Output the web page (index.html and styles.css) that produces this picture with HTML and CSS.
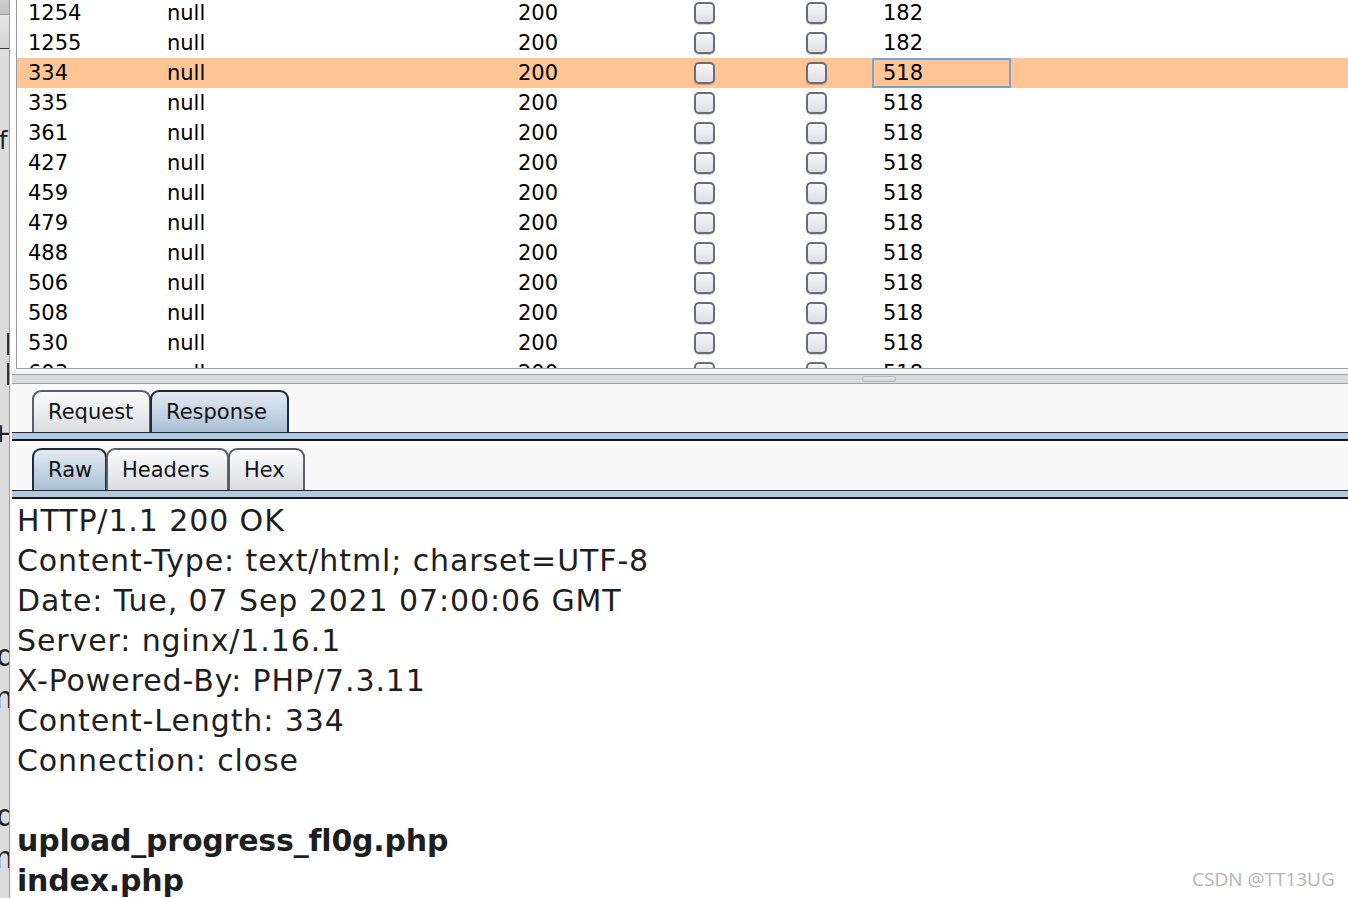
FILE: index.html
```html
<!DOCTYPE html>
<html>
<head>
<meta charset="utf-8">
<link rel="stylesheet" href="styles.css">
</head>
<body>
<div class="app">
  <div class="strip">
    <div class="s-top"></div>
    <div class="s-btn"></div>
    <div class="s-frag s-f">f</div>
    <div class="s-bar s-bar1"></div>
    <div class="s-bar s-bar2"></div>
    <div class="s-frag s-plus">+</div>
    <div class="s-frag s-big s-ld1">ld</div>
    <div class="s-frag s-big s-m1">m</div>
    <div class="s-frag s-big s-ld2">ld</div>
    <div class="s-frag s-big s-m2">m</div>
  </div>
  <div class="main">
    <div class="table-zone">
      <div class="table">
        <div class="rows">
          <div class="row"><div class="c c1">1254</div><div class="c c2">null</div><div class="c c3">200</div><div class="c c4"><span class="cb"></span></div><div class="c c5"><span class="cb"></span></div><div class="c c6">182</div></div>
          <div class="row"><div class="c c1">1255</div><div class="c c2">null</div><div class="c c3">200</div><div class="c c4"><span class="cb"></span></div><div class="c c5"><span class="cb"></span></div><div class="c c6">182</div></div>
          <div class="row sel"><div class="c c1">334</div><div class="c c2">null</div><div class="c c3">200</div><div class="c c4"><span class="cb"></span></div><div class="c c5"><span class="cb"></span></div><div class="c c6 focus">518</div></div>
          <div class="row"><div class="c c1">335</div><div class="c c2">null</div><div class="c c3">200</div><div class="c c4"><span class="cb"></span></div><div class="c c5"><span class="cb"></span></div><div class="c c6">518</div></div>
          <div class="row"><div class="c c1">361</div><div class="c c2">null</div><div class="c c3">200</div><div class="c c4"><span class="cb"></span></div><div class="c c5"><span class="cb"></span></div><div class="c c6">518</div></div>
          <div class="row"><div class="c c1">427</div><div class="c c2">null</div><div class="c c3">200</div><div class="c c4"><span class="cb"></span></div><div class="c c5"><span class="cb"></span></div><div class="c c6">518</div></div>
          <div class="row"><div class="c c1">459</div><div class="c c2">null</div><div class="c c3">200</div><div class="c c4"><span class="cb"></span></div><div class="c c5"><span class="cb"></span></div><div class="c c6">518</div></div>
          <div class="row"><div class="c c1">479</div><div class="c c2">null</div><div class="c c3">200</div><div class="c c4"><span class="cb"></span></div><div class="c c5"><span class="cb"></span></div><div class="c c6">518</div></div>
          <div class="row"><div class="c c1">488</div><div class="c c2">null</div><div class="c c3">200</div><div class="c c4"><span class="cb"></span></div><div class="c c5"><span class="cb"></span></div><div class="c c6">518</div></div>
          <div class="row"><div class="c c1">506</div><div class="c c2">null</div><div class="c c3">200</div><div class="c c4"><span class="cb"></span></div><div class="c c5"><span class="cb"></span></div><div class="c c6">518</div></div>
          <div class="row"><div class="c c1">508</div><div class="c c2">null</div><div class="c c3">200</div><div class="c c4"><span class="cb"></span></div><div class="c c5"><span class="cb"></span></div><div class="c c6">518</div></div>
          <div class="row"><div class="c c1">530</div><div class="c c2">null</div><div class="c c3">200</div><div class="c c4"><span class="cb"></span></div><div class="c c5"><span class="cb"></span></div><div class="c c6">518</div></div>
          <div class="row"><div class="c c1">603</div><div class="c c2">null</div><div class="c c3">200</div><div class="c c4"><span class="cb"></span></div><div class="c c5"><span class="cb"></span></div><div class="c c6">518</div></div>
        </div>
      </div>
    </div>
    <div class="gap1"></div>
    <div class="splitter"><div class="handle"></div></div>
    <div class="tabs-zone">
      <div class="tabs">
        <div class="tab tab-req">Request</div>
        <div class="tab active tab-resp">Response</div>
      </div>
      <div class="tabline"></div>
      <div class="tabs sub">
        <div class="tab active tab-raw">Raw</div>
        <div class="tab tab-headers">Headers</div>
        <div class="tab tab-hex">Hex</div>
      </div>
      <div class="tabline"></div>
    </div>
    <div class="content">
      <div class="ln">HTTP/1.1 200 OK</div>
      <div class="ln">Content-Type: text/html; charset=UTF-8</div>
      <div class="ln">Date: Tue, 07 Sep 2021 07:00:06 GMT</div>
      <div class="ln">Server: nginx/1.16.1</div>
      <div class="ln">X-Powered-By: PHP/7.3.11</div>
      <div class="ln">Content-Length: 334</div>
      <div class="ln">Connection: close</div>
      <div class="ln blank"></div>
      <div class="ln b">upload_progress_fl0g.php</div>
      <div class="ln b">index.php</div>
    </div>
  </div>
</div>
<div class="watermark">CSDN @TT13UG</div>
</body>
</html>
```

FILE: styles.css
```css
html, body {
  margin: 0;
  padding: 0;
  width: 1348px;
  height: 898px;
  overflow: hidden;
  background: #ffffff;
}

.app {
  display: flex;
  width: 1348px;
  height: 898px;
  font-family: "DejaVu Sans", "Liberation Sans", sans-serif;
  color: #000;
}

/* left strip */
.strip {
  width: 9px;
  flex: none;
  background: #dddddd;
  border-right: 1px solid #9c9c9c;
  display: flex;
  flex-direction: column;
  overflow: hidden;
}
.s-top {
  height: 14px;
  background: linear-gradient(#cfcfcf, #c2c2c2);
  border-bottom: 1px solid #a0a0a0;
  flex: none;
}
.s-btn {
  height: 33px;
  background: linear-gradient(#e6e6e6, #d4d4d4);
  border-bottom: 1px solid #3a3a3a;
  flex: none;
}
.s-frag {
  flex: none;
  white-space: nowrap;
  color: #222;
  font-size: 24px;
  line-height: 24px;
  height: 24px;
}
.s-f {
  margin-top: 80px;
  text-indent: -1px;
}
.s-bar {
  flex: none;
  width: 2px;
  height: 22px;
  background: #333;
  margin-left: 7px;
}
.s-bar1 { margin-top: 180px; }
.s-bar2 { margin-top: 8px; }
.s-plus {
  margin-top: 36px;
  text-indent: -10px;
  font-size: 26px;
}
.s-big {
  font-size: 30px;
  line-height: 30px;
  height: 30px;
  text-indent: -12px;
}
.s-ld1 { margin-top: 196px; }
.s-m1 { margin-top: 12px; text-indent: -16px; }
.s-ld2 { margin-top: 88px; }
.s-m2 { margin-top: 12px; text-indent: -16px; }

/* main */
.main {
  flex: 1;
  display: flex;
  flex-direction: column;
  background: #f9f9f9;
  min-width: 0;
}

.table-zone {
  height: 369px;
  flex: none;
  background: #ffffff;
  padding-left: 6px;
}
.table {
  height: 368px;
  border-left: 1px solid #9a9a9a;
  border-bottom: 1px solid #9a9ea6;
  overflow: hidden;
  background: #fff;
}
.rows {
  margin-top: -2px;
}
.row {
  display: grid;
  grid-template-columns: 140px 350px 157px 112px 96px 139px 1fr;
  height: 30px;
  font-size: 21px;
  line-height: 30px;
}
.row.sel {
  background: #ffc594;
}
.c {
  box-sizing: border-box;
  height: 30px;
  display: flex;
  align-items: center;
  white-space: nowrap;
}
.c1 { padding-left: 11px; }
.c2 { padding-left: 10px; }
.c3 { padding-left: 11px; }
.c4 { padding-left: 30px; }
.c5 { padding-left: 30px; }
.c6 { padding-left: 11px; }
.c6.focus {
  border: 2px solid #7aa3d3;
  padding-left: 9px;
}
.cb {
  display: block;
  box-sizing: border-box;
  width: 21px;
  height: 22px;
  border: 2px solid #6a6d75;
  border-radius: 5px;
  background: linear-gradient(#f7f7f9, #dcdee4);
  box-shadow: 0 1px 0 rgba(0,0,0,0.18);
}

.gap1 {
  height: 5px;
  flex: none;
  background: #f4f4f4;
}
.splitter {
  flex: none;
  height: 8px;
  margin-left: 2px;
  background: #d6d9de;
  border-top: 1px solid #9ea2a9;
  border-bottom: 1px solid #9ea2a9;
  display: flex;
}
.handle {
  margin-left: 850px;
  margin-top: 1px;
  width: 34px;
  height: 6px;
  border-radius: 4px;
  background: linear-gradient(#e9ebee, #cfd3d9);
  border: 1px solid #b4b8bf;
  box-sizing: border-box;
}

.tabs-zone {
  flex: none;
  margin-left: 2px;
  padding-top: 6px;
  background: #f9f9f9;
}
.tabs {
  display: flex;
  padding-left: 20px;
  height: 42px;
  align-items: flex-end;
}
.tabs.sub {
  margin-top: 7px;
}
.tab {
  box-sizing: border-box;
  height: 42px;
  padding: 0 14px;
  font-size: 21px;
  line-height: 40px;
  border: 2px solid #5b6068;
  border-bottom: none;
  border-radius: 9px 9px 0 0;
  background: linear-gradient(#fbfbfc, #dcdde1);
  color: #111;
  white-space: nowrap;
}
.tab + .tab {
  margin-left: -1px;
}
.tab.active {
  background: linear-gradient(#e3eaf1, #a9c0d5);
  border-color: #1f2b3a;
}
.tab-req { width: 119px; }
.tab-resp { width: 139px; }
.tab-raw { width: 75px; }
.tab-headers { width: 123px; }
.tab-hex { width: 77px; }
.tabline {
  height: 6px;
  background: #b5c9dd;
  border-top: 1px solid #1c2838;
  border-bottom: 2px solid #101924;
}

.content {
  flex: 1;
  margin-left: 2px;
  background: #ffffff;
  padding-left: 5px;
  padding-top: 2px;
  font-family: "DejaVu Sans", "Liberation Sans", sans-serif;
  font-size: 30px;
  line-height: 40px;
  letter-spacing: 0.9px;
  color: #1e1e1e;
}
.ln {
  height: 40px;
  white-space: nowrap;
}
.ln.b {
  font-weight: bold;
  letter-spacing: -0.2px;
}

.watermark {
  position: absolute;
  left: 1192px;
  top: 866px;
  font-family: "Open Sans", sans-serif;
  font-size: 19px;
  line-height: 26px;
  color: #b3b3b3;
}
```
